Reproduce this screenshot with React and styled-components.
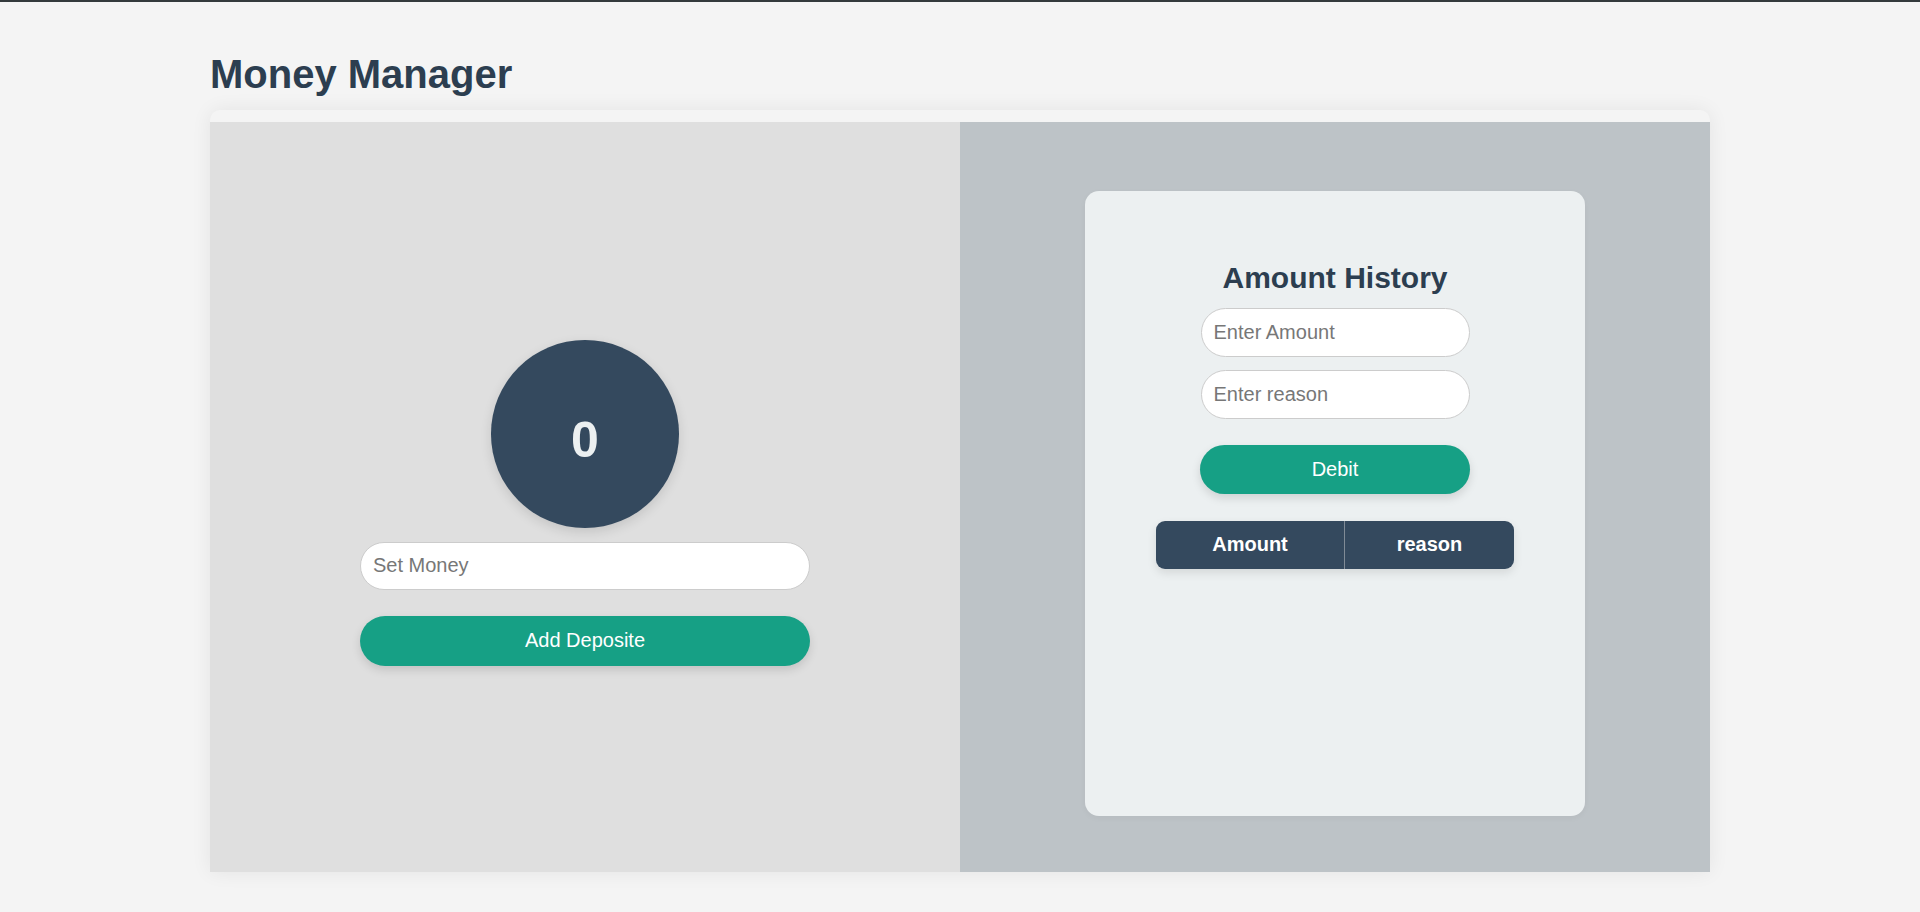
import React, { useState } from "react";
import styled, { createGlobalStyle } from "styled-components";

const GlobalStyle = createGlobalStyle`
  * { box-sizing: border-box; }
  html, body { margin: 0; padding: 0; }
  body {
    background: #f4f4f4;
    border-top: 2px solid #343a3c;
    font-family: "Liberation Sans", Arial, sans-serif;
    min-height: 912px;
  }
`;

const Page = styled.div`
  width: 1500px;
  margin: 0 auto;
`;

const Title = styled.h1`
  margin: 50px 0 13px;
  font-size: 40px;
  font-weight: 700;
  line-height: normal;
  color: #2c3e50;
`;

const Board = styled.main`
  display: grid;
  grid-template-columns: 1fr 1fr;
  padding-top: 12px;
  background: #f4f4f4;
  border-radius: 10px 10px 0 0;
  box-shadow: 0 0 20px rgba(0, 0, 0, 0.07);
  overflow: hidden;
`;

const Panel = styled.section`
  height: 750px;
  padding-top: 12px;
  display: flex;
  flex-direction: column;
  align-items: center;
  justify-content: center;
  background: ${(p) => p.$bg};
`;

const Balance = styled.div`
  width: 25%;
  aspect-ratio: 1 / 1;
  border-radius: 50%;
  background: #34495e;
  color: #ecf0f1;
  font-size: 50px;
  font-weight: 700;
  display: flex;
  align-items: center;
  justify-content: center;
  padding-top: 12px;
  box-shadow: 0 4px 12px rgba(0, 0, 0, 0.12);
  margin-bottom: 14px;
`;

const Field = styled.input`
  width: ${(p) => p.$w};
  height: ${(p) => p.$h}px;
  padding: 0 12px;
  border: 1px solid #cccccc;
  border-radius: 25px;
  background: #ffffff;
  font-family: "Liberation Sans", Arial, sans-serif;
  font-size: 20px;
  color: #333;
  outline: none;
  margin-bottom: ${(p) => p.$mb}px;
  &::placeholder { color: #777777; }
`;

const ActionButton = styled.button`
  width: ${(p) => p.$w};
  height: ${(p) => p.$h}px;
  border: none;
  border-radius: 25px;
  background: #16a085;
  color: #ffffff;
  font-family: "Liberation Sans", Arial, sans-serif;
  font-size: 20px;
  cursor: pointer;
  box-shadow: 0 4px 10px rgba(0, 0, 0, 0.13);
  margin-bottom: ${(p) => p.$mb || 0}px;
`;

const Card = styled.div`
  width: 500px;
  height: 625px;
  background: #ecf0f1;
  border-radius: 14px;
  padding-top: 70px;
  display: flex;
  flex-direction: column;
  align-items: center;
  box-shadow: 0 2px 6px rgba(0, 0, 0, 0.04);
`;

const CardTitle = styled.h2`
  margin: 0 0 13px;
  font-size: 30px;
  font-weight: 700;
  line-height: normal;
  color: #2c3e50;
`;

const History = styled.table`
  border-collapse: separate;
  border-spacing: 0;
  border-radius: 9px;
  overflow: hidden;
  background: #34495e;
  box-shadow: 0 4px 10px rgba(0, 0, 0, 0.1);
`;

const HeadCell = styled.th`
  width: ${(p) => p.$w}px;
  height: 48px;
  padding: 0;
  color: #ffffff;
  font-size: 20px;
  font-weight: 700;
  text-align: center;
  border-left: ${(p) => (p.$divider ? "1px solid #808b96" : "none")};
`;

export default function App() {
  const [money, setMoney] = useState("");
  const [amount, setAmount] = useState("");
  const [reason, setReason] = useState("");

  return (
    <>
      <GlobalStyle />
      <Page>
        <Title>Money Manager</Title>
        <Board>
          <Panel $bg="#dfdfdf">
            <Balance>0</Balance>
            <Field
              $w="60%"
              $h={48}
              $mb={26}
              placeholder="Set Money"
              value={money}
              onChange={(e) => setMoney(e.target.value)}
            />
            <ActionButton $w="60%" $h={50}>Add Deposite</ActionButton>
          </Panel>
          <Panel $bg="#bdc3c7">
            <Card>
              <CardTitle>Amount History</CardTitle>
              <Field
                $w="269px"
                $h={49}
                $mb={13}
                placeholder="Enter Amount"
                value={amount}
                onChange={(e) => setAmount(e.target.value)}
              />
              <Field
                $w="269px"
                $h={49}
                $mb={26}
                placeholder="Enter reason"
                value={reason}
                onChange={(e) => setReason(e.target.value)}
              />
              <ActionButton $w="270px" $h={49} $mb={27}>Debit</ActionButton>
              <History>
                <thead>
                  <tr>
                    <HeadCell $w={188}>Amount</HeadCell>
                    <HeadCell $w={170} $divider>reason</HeadCell>
                  </tr>
                </thead>
              </History>
            </Card>
          </Panel>
        </Board>
      </Page>
    </>
  );
}
